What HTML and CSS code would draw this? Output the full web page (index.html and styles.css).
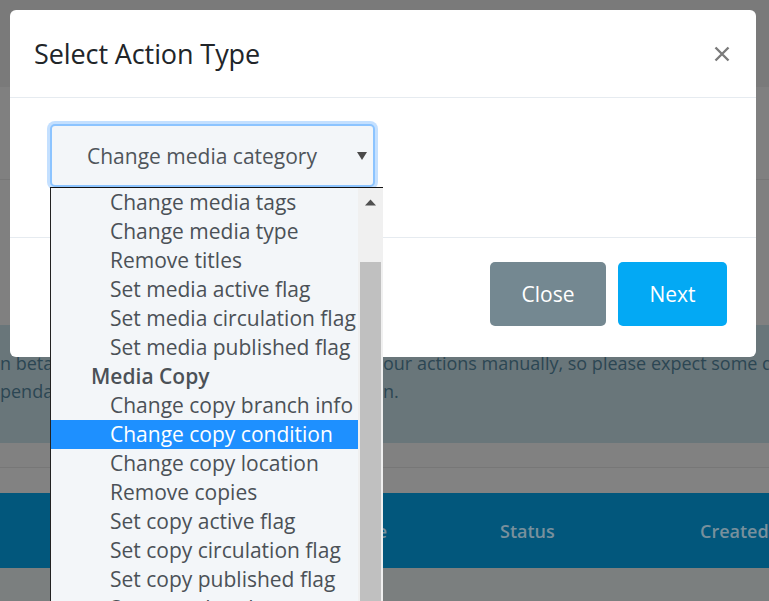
FILE: index.html
```html
<!DOCTYPE html>
<html lang="en">
<head>
<meta charset="utf-8">
<title>Select Action Type</title>
<link rel="stylesheet" href="styles.css">
</head>
<body>
<div class="page">
  <div class="topbar"></div>
  <div class="subbar"></div>
  <div class="spacer"></div>
  <div class="alert">
    <p class="alert-line"><span class="alert-lead">n beta, and the library staff will process y</span>our actions manually, so please expect some delays</p>
    <p class="alert-line"><span class="alert-lead">pendant on the number of titles in your selectio</span>n.</p>
  </div>
  <div class="tabs"></div>
  <div class="toolbar"></div>
  <div class="thead">
    <span class="th th-type">Action Type</span>
    <span class="th th-status">Status</span>
    <span class="th th-created">Created</span>
  </div>
  <div class="rows"></div>
</div>

<div class="modal">
  <div class="modal-header">
    <h2 class="modal-title">Select Action Type</h2>
    <button class="close" aria-label="Close">
      <svg width="16" height="16" viewBox="0 0 16 16"><path d="M1.5 1.5 L14.5 14.5 M14.5 1.5 L1.5 14.5" stroke="#7b7b7b" stroke-width="2.4" stroke-linecap="butt"/></svg>
    </button>
  </div>
  <div class="modal-body">
    <div class="select">
      <span class="select-value">Change media category</span>
      <svg class="caret" width="12" height="10" viewBox="0 0 12 10"><polygon points="1,1 11,1 6,9" fill="#4a4a4a"/></svg>
    </div>
  </div>
  <div class="modal-footer">
    <button class="btn btn-close">Close</button>
    <button class="btn btn-next">Next</button>
  </div>
</div>

<div class="listbox">
  <ul class="options">
    <li class="opt">Change media tags</li>
    <li class="opt">Change media type</li>
    <li class="opt">Remove titles</li>
    <li class="opt">Set media active flag</li>
    <li class="opt">Set media circulation flag</li>
    <li class="opt">Set media published flag</li>
    <li class="group">Media Copy</li>
    <li class="opt">Change copy branch info</li>
    <li class="opt selected">Change copy condition</li>
    <li class="opt">Change copy location</li>
    <li class="opt">Remove copies</li>
    <li class="opt">Set copy active flag</li>
    <li class="opt">Set copy circulation flag</li>
    <li class="opt">Set copy published flag</li>
    <li class="opt">Set copy due date</li>
  </ul>
  <div class="scrollbar">
    <svg class="arrow-up" width="11" height="7" viewBox="0 0 11 7"><polygon points="0,6.5 11,6.5 5.5,0.5" fill="#505050"/></svg>
    <div class="thumb"></div>
  </div>
</div>
</body>
</html>
```
FILE: styles.css
```css
html, body {
  margin: 0;
  padding: 0;
}
body {
  width: 769px;
  height: 601px;
  overflow: hidden;
  position: relative;
  font-family: "Open Sans", "Noto Sans", sans-serif;
  background: #7b7f7f;
}

/* dimmed page behind the modal */
.page {
  width: 769px;
}
.topbar {
  height: 87px;
  background: #7a7a7a;
}
.subbar {
  height: 92px;
  background: #808080;
  border-bottom: 1px solid #777777;
}
.spacer {
  height: 145px;
  background: #808080;
}
.alert {
  height: 118px;
  box-sizing: border-box;
  padding-top: 24px;
  background: #69767a;
  color: #2c4653;
  font-size: 18px;
  line-height: 28px;
  white-space: nowrap;
  overflow: hidden;
}
.alert-line {
  margin: 0;
}
.alert-lead {
  display: inline-block;
  width: 383px;
  overflow: hidden;
  vertical-align: top;
}
.tabs {
  height: 24px;
  background: #818181;
  border-bottom: 1px solid #777777;
}
.toolbar {
  height: 25px;
  background: #828282;
}
.thead {
  height: 75px;
  background: #02577c;
  display: flex;
  align-items: center;
  font-size: 18px;
  font-weight: 600;
  color: #78909c;
  white-space: nowrap;
}
.th-type {
  width: 387px;
  text-align: right;
}
.th-status {
  width: 200px;
  padding-left: 113px;
}
.th-created {
  flex: 1;
}
.rows {
  height: 40px;
  background: #7b7f7f;
}

/* modal */
.modal {
  position: absolute;
  left: 10px;
  top: 10px;
  width: 746px;
  background: #ffffff;
  border-radius: 6px;
}
.modal-header {
  height: 88px;
  box-sizing: border-box;
  border-bottom: 1px solid #e6ebf0;
  display: flex;
  align-items: center;
  justify-content: space-between;
  padding: 0 26px 0 24px;
}
.modal-title {
  margin: 0;
  font-size: 27px;
  font-weight: 400;
  color: #212529;
  letter-spacing: -0.1px;
}
.close {
  border: 0;
  background: none;
  padding: 0;
  width: 16px;
  height: 16px;
  display: flex;
}
.modal-body {
  height: 140px;
  box-sizing: border-box;
  border-bottom: 1px solid #e6ebf0;
  padding: 26px 0 0 40px;
}
.select {
  width: 325px;
  height: 63px;
  box-sizing: border-box;
  border: 2px solid #8cc4ff;
  border-radius: 5px;
  box-shadow: 0 0 0 3px #c4e0ff;
  background: #f3f6f9;
  display: flex;
  align-items: center;
  padding-right: 5px;
  font-size: 21px;
  color: #4f555b;
}
.select-value {
  flex: 1;
  text-align: center;
  padding-right: 4px;
}
.caret {
  display: block;
}
.modal-footer {
  height: 119px;
  box-sizing: border-box;
  display: flex;
  justify-content: flex-end;
  align-items: flex-start;
  gap: 12px;
  padding: 24px 29px 0 0;
}
.btn {
  height: 64px;
  border: 0;
  border-radius: 5px;
  color: #ffffff;
  font-family: "Open Sans", "Noto Sans", sans-serif;
  font-size: 21px;
  padding: 0;
}
.btn-close {
  width: 116px;
  background: #748891;
}
.btn-next {
  width: 109px;
  background: #03a9f4;
}

/* open dropdown list */
.listbox {
  position: absolute;
  left: 50px;
  top: 187px;
  width: 333px;
  height: 430px;
  box-sizing: border-box;
  border-top: 1px solid #111111;
  border-left: 1px solid #222222;
  background: #f3f6f9;
  display: flex;
  overflow: hidden;
}
.options {
  list-style: none;
  margin: 0;
  padding: 0;
  flex: 1;
  font-size: 21px;
  line-height: 29px;
  color: #4b5157;
  white-space: nowrap;
}
.opt {
  padding-left: 59px;
}
.group {
  padding-left: 40px;
  font-weight: 600;
}
.selected {
  background: #1e90ff;
  color: #ffffff;
}
.scrollbar {
  width: 25px;
  background: #f0f0f0;
  display: flex;
  flex-direction: column;
  align-items: center;
}
.arrow-up {
  display: block;
  margin-top: 11px;
}
.thumb {
  width: 21px;
  margin-top: 56px;
  flex: 1;
  background: #c0c0c0;
}
```
